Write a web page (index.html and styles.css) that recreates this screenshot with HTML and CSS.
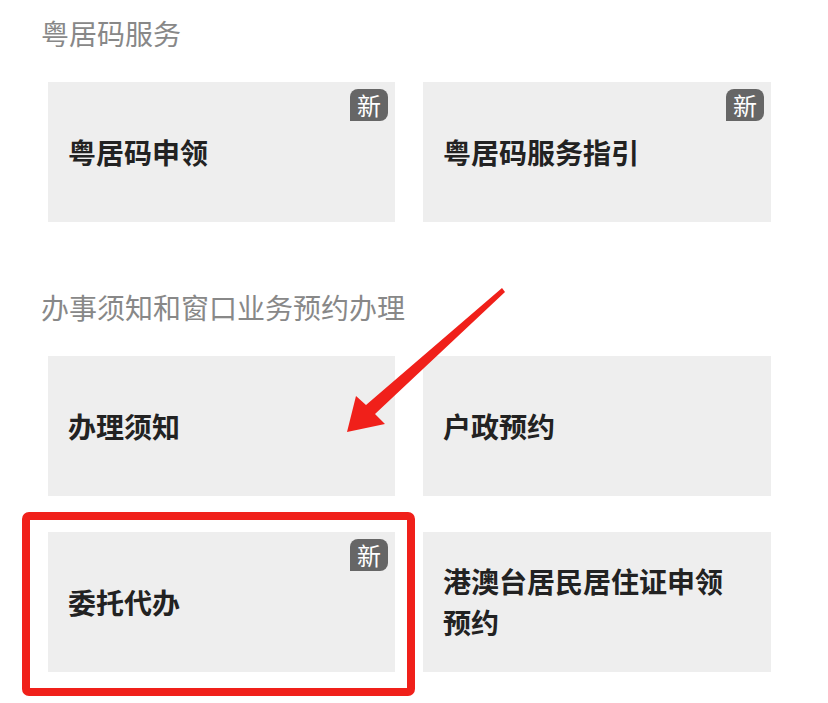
FILE: index.html
```html
<!DOCTYPE html>
<html lang="zh-CN">
<head>
  <meta charset="UTF-8">
  <meta name="viewport" content="width=device-width, initial-scale=1.0">
  <title>粤居码服务</title>
  <link rel="stylesheet" href="styles.css">
</head>
<body>
  <div class="page">
    <div class="section">
      <div class="section-title">粤居码服务</div>
      <div class="service-grid">
        <div class="service-card">
          <span class="card-label">粤居码申领</span>
          <span class="badge-new">新</span>
        </div>
        <div class="service-card">
          <span class="card-label">粤居码服务指引</span>
          <span class="badge-new">新</span>
        </div>
      </div>
    </div>

    <div class="section">
      <div class="section-title">办事须知和窗口业务预约办理</div>
      <div class="service-grid">
        <div class="service-card">
          <span class="card-label">办理须知</span>
        </div>
        <div class="service-card">
          <span class="card-label">户政预约</span>
        </div>
        <div class="service-card">
          <span class="card-label">委托代办</span>
          <span class="badge-new">新</span>
          <div class="highlight-box"></div>
        </div>
        <div class="service-card">
          <span class="card-label">港澳台居民居住证申领预约</span>
        </div>
      </div>
    </div>

    <svg class="pointer-arrow" width="828" height="703" viewBox="0 0 828 703">
      <polygon points="502,288 505,292 375,414 385,424 347,432 356,396 366,405" fill="#f0201a"/>
    </svg>
  </div>
</body>
</html>
```

FILE: styles.css
```css
body {
  margin: 0;
  background-color: #fff;
  font-family: "Noto Sans CJK SC", "Noto Sans", sans-serif;
}
.page {
  position: relative;
  width: 828px;
  height: 703px;
  padding: 13px 0 0 48px;
  box-sizing: border-box;
  overflow: hidden;
}
.section {
  width: 723px;
  margin-bottom: 65px;
}
.section-title {
  margin-left: -7px;
  margin-bottom: 29px;
  font-size: 28px;
  line-height: 40px;
  color: #888;
}
.service-grid {
  display: grid;
  grid-template-columns: 347px 348px;
  column-gap: 28px;
  row-gap: 36px;
}
.service-card {
  position: relative;
  height: 140px;
  padding: 0 40px 0 20px;
  display: flex;
  align-items: center;
  background-color: #eeeeee;
}
.card-label {
  font-size: 28px;
  line-height: 41px;
  font-weight: 700;
  color: #222;
}
.badge-new {
  position: absolute;
  top: 7px;
  right: 7px;
  width: 38px;
  height: 32px;
  border-radius: 8px 8px 8px 0;
  background-color: #666;
  color: #fff;
  font-size: 24px;
  line-height: 31px;
  text-align: center;
}
.highlight-box {
  position: absolute;
  left: -26px;
  top: -20px;
  width: 393px;
  height: 184px;
  border: 8px solid #f0201a;
  border-radius: 7px;
  box-sizing: border-box;
}
.pointer-arrow {
  position: absolute;
  left: 0;
  top: 0;
}
```
